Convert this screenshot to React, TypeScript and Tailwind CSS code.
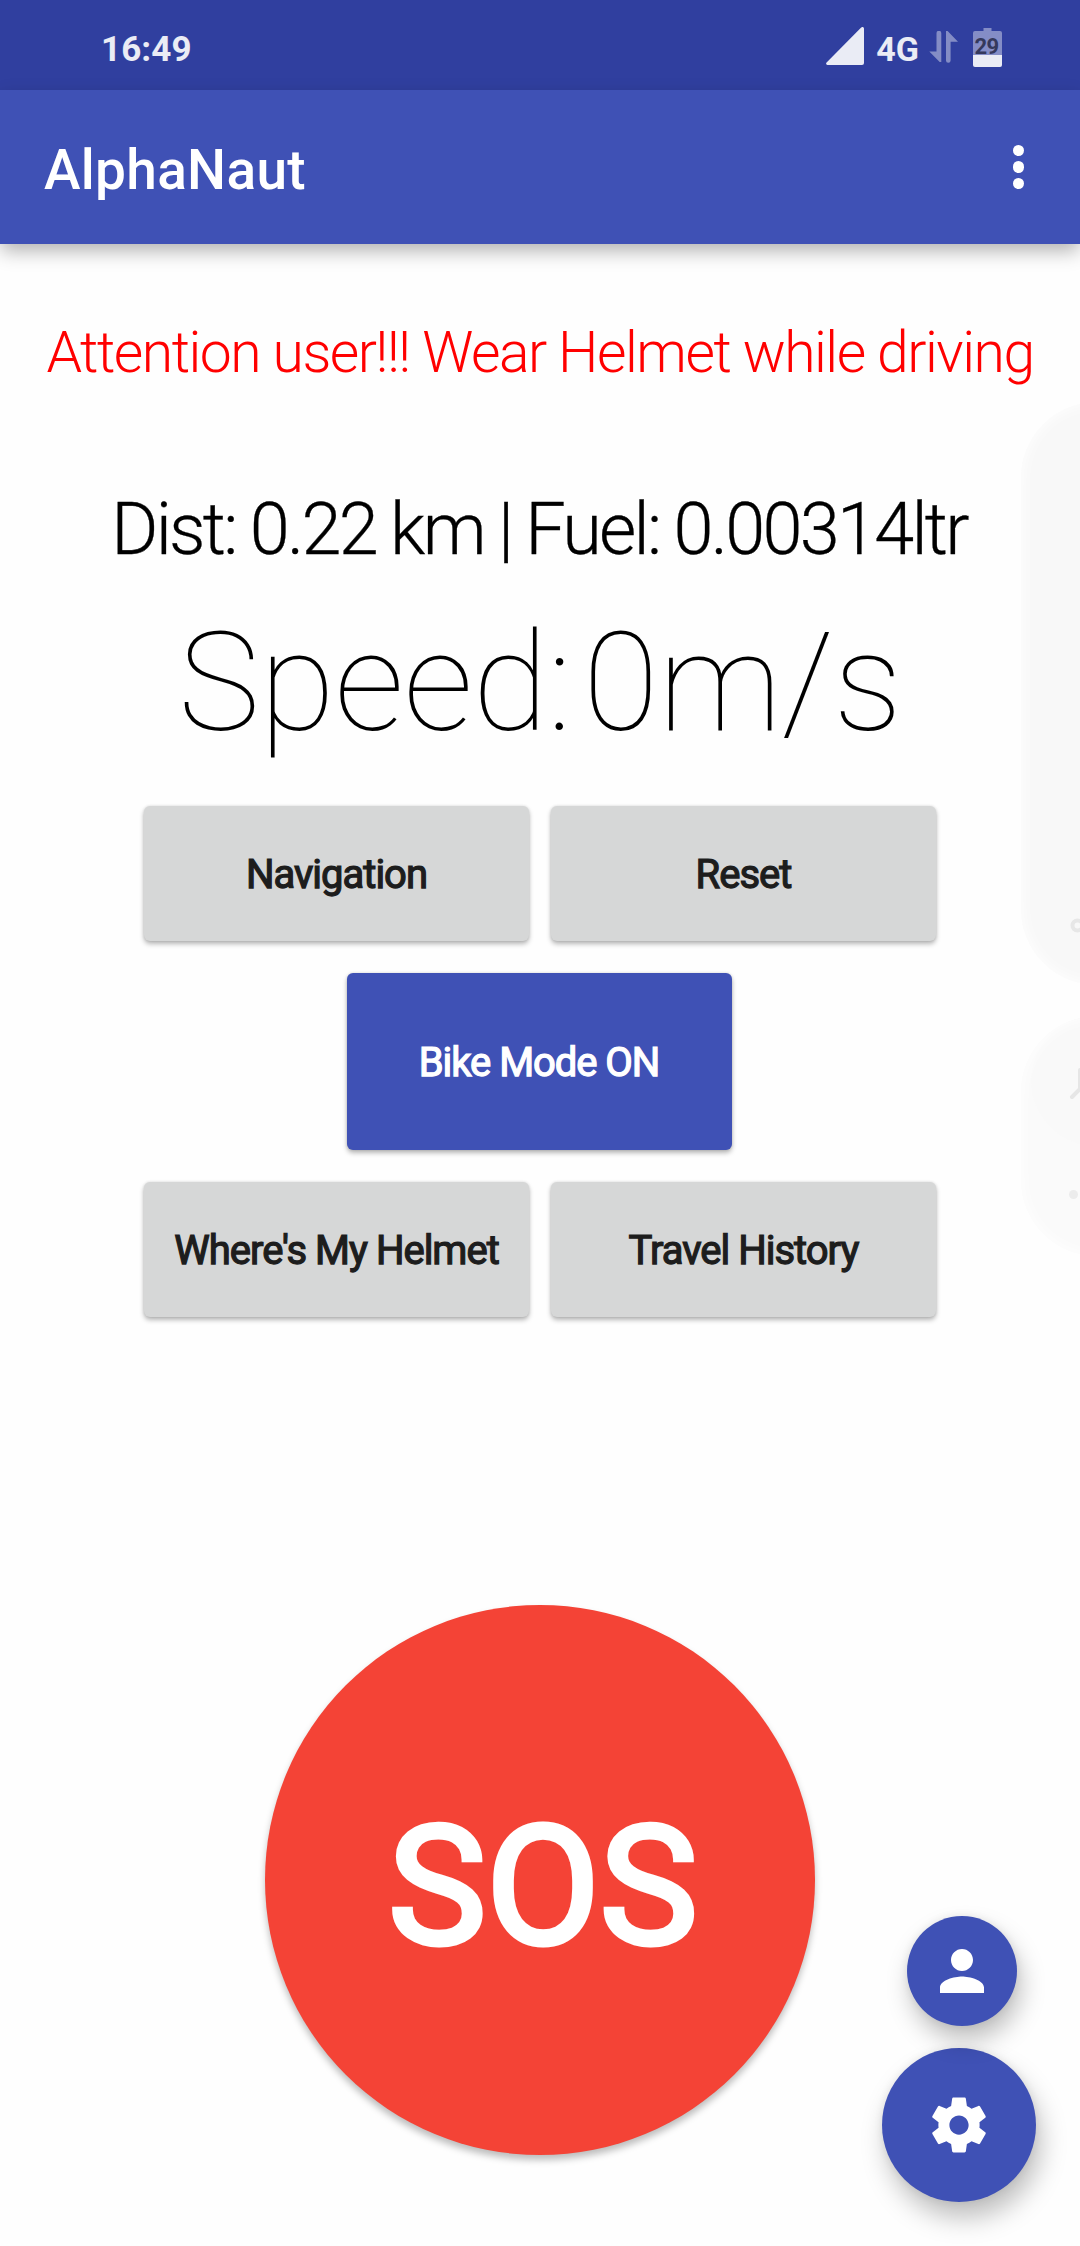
import type { ReactNode } from "react";

function StatusBar() {
  return (
    <div className="flex h-[90px] items-center justify-between bg-[#303f9f] pl-[101px] pr-[78px] text-white/90">
      <span className="pt-[8px] text-[35px] font-bold leading-none tracking-[0.1px]">16:49</span>
      <div className="flex items-center">
        <svg className="mt-[2px] h-[38px] w-[38px]" viewBox="0 0 38 38" fill="currentColor">
          <path d="M1.500 38H36a2 2 0 0 0 2-2V1.800C38 .2 36.300-.5 35.200.6L.6 35.400C-.4 36.400.2 38 1.500 38z" />
        </svg>
        <span className="ml-[12px] pt-[7px] text-[34px] font-bold leading-none">4G</span>
        <svg className="ml-[10px] mt-[4px] h-[32px] w-[29px] opacity-45" viewBox="0 0 29 32" fill="currentColor">
          <path d="M7.500 2.200a2.400 2.400 0 0 1 4.800 0V31h-1.600L.3 20.600h7.200zM17 0h1.600l10.400 10.800h-7.400v18.700a2.300 2.300 0 0 1-4.600 0z" />
        </svg>
        <div className="relative ml-[15px] mt-[5px] h-[39px] w-[29px]">
          <svg className="h-full w-full" viewBox="0 0 29 39" fill="currentColor">
            <path d="M10.500 0h8v3H27a2 2 0 0 1 2 2v22H0V5a2 2 0 0 1 2-2h8.500z" opacity=".45" />
            <path d="M0 27h29v10a2 2 0 0 1-2 2H2a2 2 0 0 1-2-2z" />
          </svg>
          <span className="absolute -left-[1px] top-[8px] w-[29px] text-center text-[22px] font-bold leading-none tracking-[-0.5px] text-[#35395c]">29</span>
        </div>
      </div>
    </div>
  );
}

function AppBar() {
  return (
    <header className="relative flex h-[154px] items-center justify-between bg-[#3f51b5] pl-[44px] pr-[56px] text-white shadow-[0_8px_18px_-1px_rgba(0,0,0,0.3)]">
      <h1 className="pt-[7px] text-[55px] font-medium leading-none tracking-[0.3px]">AlphaNaut</h1>
      <div className="flex flex-col gap-[5px]">
        <span className="size-[11.500px] rounded-full bg-white" />
        <span className="size-[11.500px] rounded-full bg-white" />
        <span className="size-[11.500px] rounded-full bg-white" />
      </div>
    </header>
  );
}

function ActionButton({ children }: { children: ReactNode }) {
  return (
    <button className="h-[135px] w-[385px] rounded-[6px] bg-[#d6d7d7] pt-[2px] text-[40px] tracking-[-1px] text-[#1d1d1d] shadow-[0_3px_5px_rgba(0,0,0,0.28),0_0_3px_rgba(0,0,0,0.12)] [-webkit-text-stroke:1.25px_#1d1d1d]">
      {children}
    </button>
  );
}

function EdgePanels() {
  return (
    <div className="absolute right-0 top-[402px] flex w-[59px] flex-col gap-[31px] overflow-hidden">
      <div className="h-[583px] w-[160px] rounded-[76px] bg-[#f8f8f8] shadow-[inset_0_0_16px_#fefefe]">
        <svg className="ml-[49px] mt-[516px] size-[15px]" viewBox="0 0 15 15">
          <circle cx="7.500" cy="7.500" r="5" fill="none" stroke="#e7e7e7" strokeWidth="4" />
        </svg>
      </div>
      <div className="relative h-[240px] w-[160px] overflow-hidden rounded-[76px] bg-[#fafafa]">
        <div className="absolute left-[10px] top-0 h-[130px] w-[140px] rounded-full bg-[#f9f9f9]" />
        <svg className="relative h-[240px] w-[59px]" viewBox="0 0 59 240">
          <path d="M51 81l8-8V54" fill="none" stroke="#e6e6e6" strokeWidth="4" strokeLinecap="round" />
          <circle cx="52.500" cy="178.500" r="4.500" fill="#ececec" />
        </svg>
        <div className="absolute inset-0 rounded-[76px] shadow-[inset_0_0_16px_#fefefe]" />
      </div>
    </div>
  );
}

function FloatingButtons() {
  return (
    <div className="absolute bottom-[44px] right-[44px] flex flex-col items-end gap-[22px]">
      <button className="relative z-10 mr-[19px] flex size-[110px] items-center justify-center rounded-full bg-[#3f51b5] shadow-[4px_14px_24px_rgba(0,0,0,0.25),0_0_8px_rgba(0,0,0,0.08)]">
        <svg className="size-[66px]" viewBox="0 0 24 24" fill="white">
          <path d="M12 12c2.210 0 4-1.790 4-4s-1.790-4-4-4-4 1.790-4 4 1.790 4 4 4zm0 2c-2.670 0-8 1.340-8 4v2h16v-2c0-2.660-5.330-4-8-4z" />
        </svg>
      </button>
      <button className="flex size-[154px] items-center justify-center rounded-full bg-[#3f51b5] shadow-[5px_16px_26px_rgba(0,0,0,0.25),0_0_8px_rgba(0,0,0,0.08)]">
        <svg className="size-[66px]" viewBox="0 0 24 24" fill="white">
          <path d="M19.430 12.980c.04-.32.07-.64.07-.98s-.03-.66-.07-.98l2.110-1.650c.19-.15.24-.42.12-.64l-2-3.460c-.12-.22-.39-.3-.61-.22l-2.490 1c-.52-.4-1.080-.73-1.690-.98l-.38-2.650C14.460 2.180 14.250 2 14 2h-4c-.25 0-.46.18-.49.42l-.38 2.650c-.61.25-1.170.59-1.690.98l-2.490-1c-.23-.09-.49 0-.61.22l-2 3.460c-.13.22-.07.49.12.64l2.110 1.650c-.04.32-.07.65-.07.98s.03.66.07.98l-2.110 1.650c-.19.15-.24.42-.12.64l2 3.460c.12.22.39.3.61.22l2.490-1c.52.4 1.080.73 1.690.98l.38 2.650c.03.24.24.42.49.42h4c.25 0 .46-.18.49-.42l.38-2.650c.61-.25 1.170-.59 1.690-.98l2.490 1c.23.09.49 0 .61-.22l2-3.460c.12-.22.07-.49-.12-.64l-2.110-1.650zM12 15.500c-1.930 0-3.500-1.570-3.500-3.500s1.570-3.500 3.500-3.500 3.500 1.570 3.500 3.500-1.570 3.500-3.500 3.500z" />
        </svg>
      </button>
    </div>
  );
}

export default function App() {
  return (
    <div className="relative h-[2246px] w-[1080px] overflow-hidden bg-[#fefefe] font-['Roboto',sans-serif]">
      <StatusBar />
      <AppBar />
      <main className="flex flex-col items-center whitespace-nowrap text-black">
        <p className="mt-[69px] text-[57px] font-light leading-[80px] tracking-[-1.480px] text-[#ff0000]">
          Attention user!!! Wear Helmet while driving
        </p>
        <p className="mr-[2px] mt-[87px] text-[72px] font-light leading-[100px] tracking-[-2.720px] [word-spacing:-0.700px] [-webkit-text-stroke:0.3px_black]">
          Dist: 0.22 km | Fuel: 0.00314ltr
        </p>
        <p className="mt-[23px] text-[138px] font-thin leading-[160px] tracking-[-0.500px] [word-spacing:-21px]">
          Speed: 0m/s
        </p>
        <div className="mt-[43px] flex flex-col items-center gap-[32px]">
          <div className="flex gap-[22px]">
            <ActionButton>Navigation</ActionButton>
            <ActionButton>Reset</ActionButton>
          </div>
          <button className="mr-[2px] h-[177px] w-[385px] rounded-[6px] bg-[#3f51b5] pt-[2px] text-[40px] tracking-[-1.050px] text-white shadow-[0_3px_5px_rgba(0,0,0,0.28),0_0_3px_rgba(0,0,0,0.12)] [-webkit-text-stroke:1.25px_white]">
            Bike Mode ON
          </button>
          <div className="flex gap-[22px]">
            <ActionButton>Where's My Helmet</ActionButton>
            <ActionButton>Travel History</ActionButton>
          </div>
        </div>
        <button className="mt-[288px] size-[550px] rounded-full bg-[#f44336] pl-[6px] pt-[12px] text-[165px] leading-none text-white shadow-[0_5px_7px_rgba(0,0,0,0.26)] [-webkit-text-stroke:5.200px_white]">
          SOS
        </button>
      </main>
      <EdgePanels />
      <FloatingButtons />
    </div>
  );
}
